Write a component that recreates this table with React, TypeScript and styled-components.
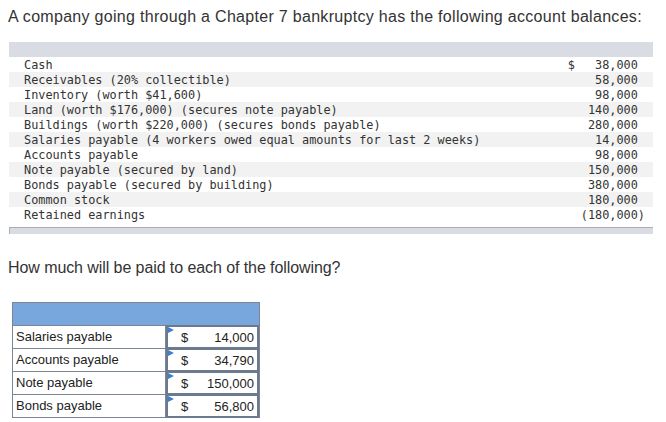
import { createGlobalStyle, styled } from 'styled-components';

const GlobalStyle = createGlobalStyle`
  body {
    margin: 8px;
    background: #ffffff;
    color: #333333;
    font-family: 'Liberation Sans', Arial, sans-serif;
  }
`;

const Prompt = styled.p`
  margin: 0;
  font-size: 16px;
  line-height: 18px;
  color: #333333;
  letter-spacing: 0.3px;
`;

const Balances = styled.div`
  width: 644px;
  margin: 16px 0 0 1px;
  font-family: 'DejaVu Sans Mono', 'Liberation Mono', monospace;
  font-size: 11.85px;
  color: #333333;
`;

const HeadBar = styled.div`
  height: 15px;
  background: #d9dce3;
`;

const BalanceRow = styled.div<{ $shade: boolean }>`
  display: grid;
  grid-template-columns: 1fr 20px 70px;
  height: 15px;
  line-height: 16px;
  padding: 0 8px 0 15px;
  background: ${(p) => (p.$shade ? '#f2f2f2' : '#ffffff')};
  white-space: pre;
`;

const Dollar = styled.span`
  text-align: right;
`;

const Amount = styled.span<{ $neg: boolean }>`
  text-align: right;
  padding-right: ${(p) => (p.$neg ? '0' : '1ch')};
`;

const FootBar = styled.div`
  height: 6px;
  margin-top: 5px;
  background: #d9dce3;
  border-top: 1px solid #a9adb5;
  border-left: 1px solid #a9adb5;
`;

const Question = styled(Prompt)`
  margin-top: 25px;
  letter-spacing: -0.08px;
`;

const AnswerTable = styled.div`
  width: 246px;
  margin: 25px 0 0 4px;
  border: 1px solid #7c8594;
  font-size: 13px;
  color: #222222;
`;

const BlueHead = styled.div`
  height: 22px;
  background: #77a7dd;
`;

const AnswerRow = styled.div`
  display: grid;
  grid-template-columns: 153px 1fr;
  height: 22px;
  border-top: 1px solid #7c8594;
`;

const Label = styled.div`
  padding-left: 3px;
  line-height: 22px;
  border-right: 1px solid #7c8594;
`;

const InputCell = styled.div`
  position: relative;
  display: flex;
  justify-content: space-between;
  align-items: center;
  padding: 0 3px 0 13px;
  margin: -1px 0 -1px 0;
  border: 2px solid #6b7a8e;
  background: #ffffff;
`;

const Flag = styled.span`
  position: absolute;
  top: 0;
  left: 0;
  width: 0;
  height: 0;
  border-top: 3px solid transparent;
  border-bottom: 3px solid transparent;
  border-left: 6px solid #3d7fd1;
`;

const balances = [
  { label: 'Cash', dollar: true, amount: '38,000' },
  { label: 'Receivables (20% collectible)', amount: '58,000' },
  { label: 'Inventory (worth $41,600)', amount: '98,000' },
  { label: 'Land (worth $176,000) (secures note payable)', amount: '140,000' },
  { label: 'Buildings (worth $220,000) (secures bonds payable)', amount: '280,000' },
  { label: 'Salaries payable (4 workers owed equal amounts for last 2 weeks)', amount: '14,000' },
  { label: 'Accounts payable', amount: '98,000' },
  { label: 'Note payable (secured by land)', amount: '150,000' },
  { label: 'Bonds payable (secured by building)', amount: '380,000' },
  { label: 'Common stock', amount: '180,000' },
  { label: 'Retained earnings', amount: '(180,000)' },
];

const answers = [
  { label: 'Salaries payable', value: '14,000' },
  { label: 'Accounts payable', value: '34,790' },
  { label: 'Note payable', value: '150,000' },
  { label: 'Bonds payable', value: '56,800' },
];

export default function App() {
  return (
    <>
      <GlobalStyle />
      <Prompt>A company going through a Chapter 7 bankruptcy has the following account balances:</Prompt>
      <Balances>
        <HeadBar />
        {balances.map((b, i) => (
          <BalanceRow key={b.label} $shade={i % 2 === 1}>
            <span>{b.label}</span>
            <Dollar>{b.dollar ? '$' : ''}</Dollar>
            <Amount $neg={b.amount.startsWith('(')}>{b.amount}</Amount>
          </BalanceRow>
        ))}
        <FootBar />
      </Balances>
      <Question>How much will be paid to each of the following?</Question>
      <AnswerTable>
        <BlueHead />
        {answers.map((a) => (
          <AnswerRow key={a.label}>
            <Label>{a.label}</Label>
            <InputCell>
              <Flag />
              <span>$</span>
              <span>{a.value}</span>
            </InputCell>
          </AnswerRow>
        ))}
      </AnswerTable>
    </>
  );
}
